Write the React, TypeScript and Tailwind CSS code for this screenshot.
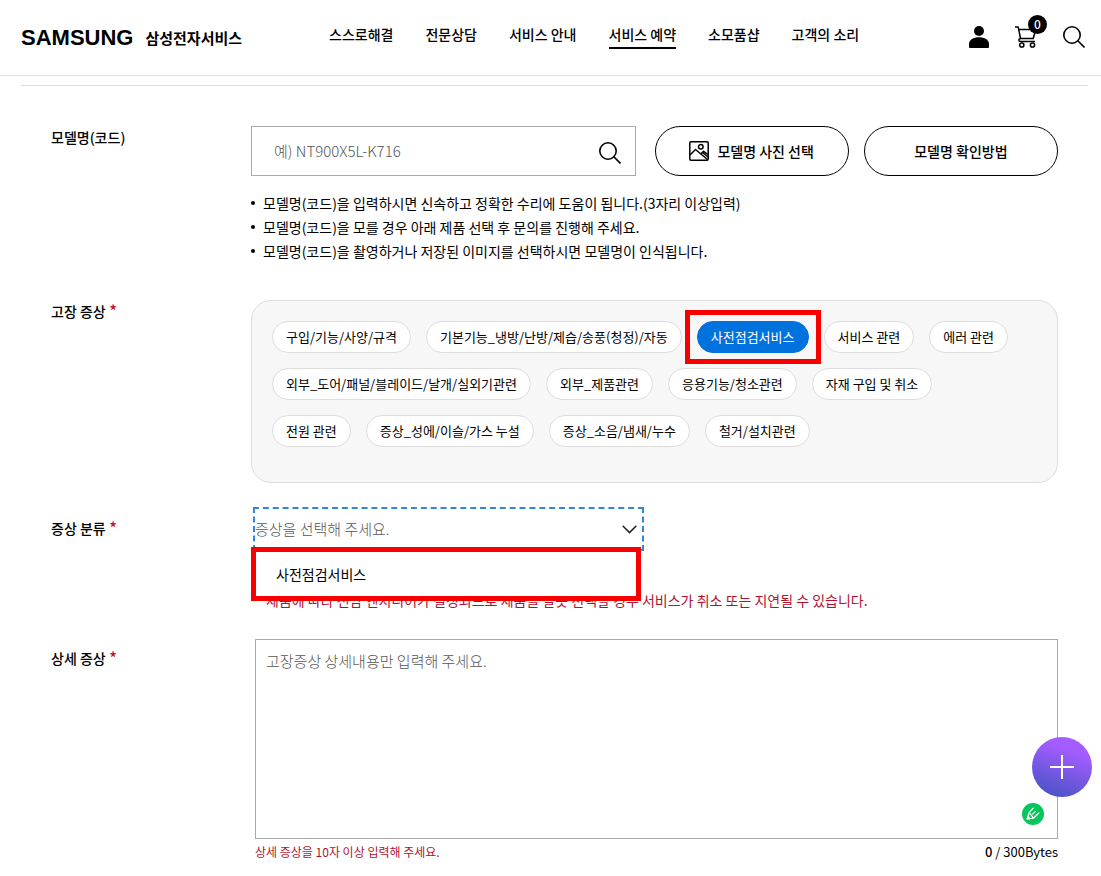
import type { ReactNode } from "react";

const navItems = ["스스로해결", "전문상담", "서비스 안내", "서비스 예약", "소모품샵", "고객의 소리"];
const activeNav = "서비스 예약";

const symptoms = [
  "구입/기능/사양/규격",
  "기본기능_냉방/난방/제습/송풍(청정)/자동",
  "사전점검서비스",
  "서비스 관련",
  "에러 관련",
  "외부_도어/패널/블레이드/날개/실외기관련",
  "외부_제품관련",
  "응용기능/청소관련",
  "자재 구입 및 취소",
  "전원 관련",
  "증상_성에/이슬/가스 누설",
  "증상_소음/냄새/누수",
  "철거/설치관련",
];
const selectedSymptom = "사전점검서비스";

const hints = [
  "모델명(코드)을 입력하시면 신속하고 정확한 수리에 도움이 됩니다.(3자리 이상입력)",
  "모델명(코드)을 모를 경우 아래 제품 선택 후 문의를 진행해 주세요.",
  "모델명(코드)을 촬영하거나 저장된 이미지를 선택하시면 모델명이 인식됩니다.",
];

function SearchIcon() {
  return (
    <svg width="22" height="22" viewBox="0 0 22 22" fill="none" stroke="#000" strokeWidth="1.6" aria-hidden="true">
      <circle cx="9" cy="9" r="8.2" />
      <path d="M14.800 14.800l6.700 6.700" />
    </svg>
  );
}

function UserIcon() {
  return (
    <svg width="20" height="22" viewBox="0 0 20 22" fill="#000" aria-hidden="true">
      <circle cx="10" cy="5" r="5" />
      <path d="M0 21v-3C0 13.800 4.500 11.300 10 11.300S20 13.800 20 18v3q0 1-1 1H1q-1 0-1-1z" />
    </svg>
  );
}

function CartIcon() {
  return (
    <svg width="22" height="22" viewBox="0 0 22 22" fill="none" stroke="#000" strokeWidth="1.500" strokeLinejoin="round" aria-hidden="true">
      <path d="M0 .9h3.200l2.300 11.600h12.700L20.800 3.500H3.800" />
      <path d="M5.500 12.500c-2.200.2-2.200 3 0 3h14.500" />
      <circle cx="6.800" cy="19" r="2.100" />
      <circle cx="17.500" cy="19" r="2.100" />
    </svg>
  );
}

function PictureIcon() {
  return (
    <svg width="20" height="20" viewBox="0 0 20 20" fill="none" stroke="#000" strokeWidth="1.500" strokeLinejoin="round" aria-hidden="true">
      <rect x=".8" y=".8" width="18.400" height="18.400" rx="1.200" />
      <circle cx="11.800" cy="5.800" r="2.300" />
      <path d="M1 14l5.500-5.500L18.500 18.500" />
      <path d="M11.800 13l2.700-2.700 4.500 3.200M13.500 11.500l5.500 4.500" />
    </svg>
  );
}

function Row({ label, htmlFor, required, labelClass, className, children }: {
  label: string;
  htmlFor?: string;
  required?: boolean;
  labelClass?: string;
  className?: string;
  children: ReactNode;
}) {
  const text = (
    <>
      {label}
      {required && <span className="text-base leading-none text-[#c4122f]"> *</span>}
    </>
  );
  const style = "block text-sm leading-[22px] font-medium";
  return (
    <div className={`flex ${className ?? ""}`}>
      <div className={`w-[200px] shrink-0 ${labelClass ?? ""}`}>
        {htmlFor ? <label htmlFor={htmlFor} className={style}>{text}</label> : <span className={style}>{text}</span>}
      </div>
      <div className="min-w-0 flex-1">{children}</div>
    </div>
  );
}

export default function App() {
  return (
    <div className="bg-white font-['Noto_Sans_CJK_KR',sans-serif] text-black">
      <header className="flex h-[76px] items-center border-b border-[#e3e3e3] pr-4 pl-[21px]">
        <a href="#" className="flex w-[308px] shrink-0 items-center gap-3">
          <span className="font-['Liberation_Sans',sans-serif] text-[22px] leading-8 font-bold">SAMSUNG</span>
          <span className="text-[15px] leading-6 font-bold whitespace-nowrap">삼성전자서비스</span>
        </a>
        <nav className="mb-1 flex flex-1 gap-8">
          {navItems.map((item) => (
            <a
              key={item}
              href="#"
              className={`border-b-2 pb-px text-sm leading-6 font-medium whitespace-nowrap ${item === activeNav ? "border-black" : "border-transparent"}`}
            >
              {item}
            </a>
          ))}
        </nav>
        <div className="mb-0.5 flex items-center gap-[26px]">
          <button type="button" aria-label="로그인"><UserIcon /></button>
          <button type="button" aria-label="장바구니" className="relative">
            <CartIcon />
            <span className="absolute -top-[11px] left-[13px] flex size-[19px] items-center justify-center rounded-full bg-black text-xs leading-none font-medium text-white">0</span>
          </button>
          <button type="button" aria-label="검색"><SearchIcon /></button>
        </div>
      </header>

      <main className="pt-[9px] pr-[13px] pl-[21px]">
        <form className="border-t border-[#dddddd] px-[30px] pt-10">
          <Row label="모델명(코드)" htmlFor="model">
            <div className="grid grid-cols-[2fr_1fr_1fr] gap-[15px]">
              <div className="mr-1 flex h-[50px] min-w-0 items-center border border-[#aaaaaa] pr-[14px] pl-[22px]">
                <input
                  id="model"
                  type="text"
                  placeholder="예) NT900X5L-K716"
                  className="min-w-0 flex-1 text-[15px] leading-6 font-light outline-none placeholder:text-[#555555]"
                />
                <button type="button" aria-label="모델명 검색" className="pt-1"><SearchIcon /></button>
              </div>
              <button type="button" className="flex h-[50px] items-center justify-center gap-2 rounded-full border border-black text-sm font-medium whitespace-nowrap">
                <PictureIcon />
                모델명 사진 선택
              </button>
              <button type="button" className="h-[50px] rounded-full border border-black text-sm font-medium whitespace-nowrap">
                모델명 확인방법
              </button>
            </div>
            <ul className="mt-[15px]">
              {hints.map((hint) => (
                <li key={hint} className="flex items-center gap-2 text-sm leading-6">
                  <span className="size-1 rounded-full bg-black" />
                  {hint}
                </li>
              ))}
            </ul>
          </Row>

          <Row label="고장 증상" required className="mt-[37px]">
            <div className="flex flex-wrap gap-y-[15px] rounded-[20px] border border-[#dddddd] bg-[#f7f7f7] px-5 pt-5 pb-[35px]">
              {symptoms.map((name) => {
                const on = name === selectedSymptom;
                return (
                  <div key={name} className="relative mr-[15px]">
                    <button
                      type="button"
                      aria-pressed={on}
                      className={`block h-8 rounded-full border px-[13px] text-[13px] leading-5 whitespace-nowrap ${on ? "border-[#0072de] bg-[#0072de] text-white" : "border-[#dddddd] bg-white"}`}
                    >
                      {name}
                    </button>
                    {on && <span className="pointer-events-none absolute -inset-x-3 -inset-y-[11px] border-[5px] border-[#f80000]" />}
                  </div>
                );
              })}
            </div>
          </Row>

          <Row label="증상 분류" htmlFor="category" required className="mt-6" labelClass="pt-[10px]">
            <div className="relative ml-[2px] w-[391px]">
              <select id="category" className="block h-11 w-full appearance-none border-2 border-dashed border-[#3288d8] text-[15px] font-light text-[#555555] outline-none">
                <option>증상을 선택해 주세요.</option>
              </select>
              <svg className="pointer-events-none absolute top-[18px] right-[7px]" width="15" height="9" viewBox="0 0 15 9" fill="none" stroke="#222" strokeWidth="1.500" aria-hidden="true">
                <path d="M.7.800l6.800 6.800L14.300.800" />
              </svg>
              <ul className="absolute top-10 -left-[2px] w-[390px] border-[5px] border-[#f80000] bg-white">
                <li>
                  <button type="button" className="block h-11 w-full px-5 text-left text-sm">사전점검서비스</button>
                </li>
              </ul>
            </div>
            <p className="mt-[37px] pl-[15px] text-sm leading-6 text-[#b0122f]">
              제품에 따라 전담 엔지니어가 결정되므로 제품을 잘못 선택할 경우 서비스가 취소 또는 지연될 수 있습니다.
            </p>
          </Row>

          <Row label="상세 증상" htmlFor="detail" required className="mt-[27px]" labelClass="pt-2">
            <div className="relative ml-1">
              <textarea
                id="detail"
                placeholder="고장증상 상세내용만 입력해 주세요."
                className="block h-[200px] w-full resize-none border border-[#aaaaaa] px-[10px] py-[9px] text-[15px] leading-6 font-light outline-none placeholder:text-[#555555]"
              />
              <button type="button" aria-label="맞춤법 검사" className="absolute right-[14px] bottom-[14px] flex size-[22px] items-center justify-center rounded-full bg-[#03c75a]">
                <svg width="14" height="14" viewBox="0 0 14 14" fill="none" stroke="#fff" strokeWidth="1.200" strokeLinecap="round" strokeLinejoin="round" aria-hidden="true">
                  <path d="M7.200 1.200L3.200 5.500 1.200 12l6.300-.8L12.800 6M3.200 5.500l4.300 5.700M6.600 7.200l2.600-2.600" />
                  <path d="M1.200 12l.8-2.600 1.800 2.300z" fill="#fff" />
                </svg>
              </button>
            </div>
            <div className="ml-1 flex justify-between pt-px leading-6">
              <p className="text-xs leading-6 text-[#b0122f]">상세 증상을 10자 이상 입력해 주세요.</p>
              <p className="text-[13px] leading-6"><b className="font-medium">0</b> / 300Bytes</p>
            </div>
          </Row>
        </form>
      </main>

      <button type="button" aria-label="메뉴 열기" className="fixed right-[9px] bottom-[79px] flex size-[60px] items-center justify-center rounded-full bg-[linear-gradient(20deg,#4453c4_5%,#a55cff_75%)]">
        <svg width="24" height="24" viewBox="0 0 24 24" stroke="#fff" strokeWidth="2" aria-hidden="true">
          <path d="M12 0v24M0 12h24" />
        </svg>
      </button>
    </div>
  );
}
